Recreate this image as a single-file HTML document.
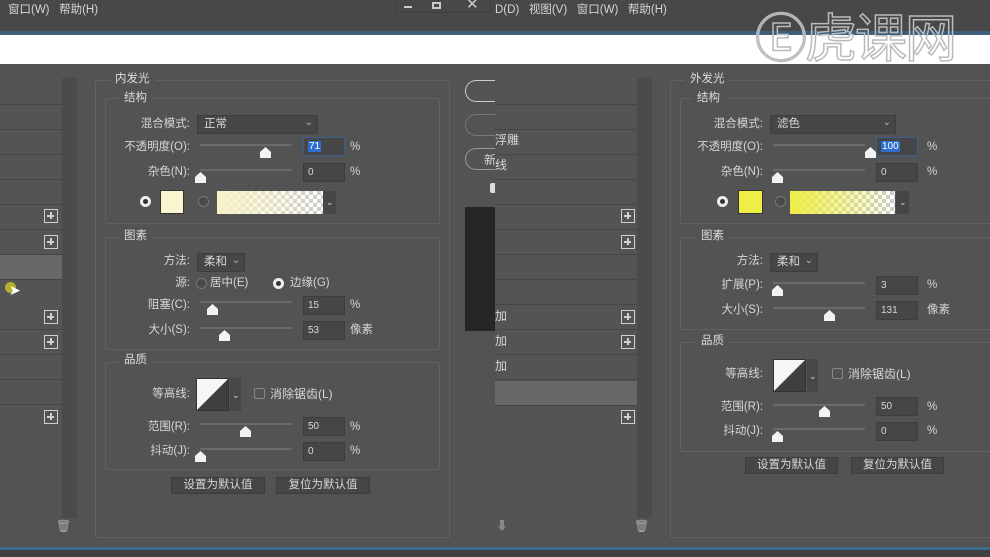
<!DOCTYPE html><html><head><meta charset="utf-8"><style>
*{margin:0;padding:0;box-sizing:border-box}
body{width:990px;height:557px;overflow:hidden;background:#535353;position:relative;font-family:"Liberation Sans","Noto Sans CJK SC",sans-serif;color:#d6d6d6;font-size:11.5px}
div,span{position:absolute}
.t{white-space:nowrap;line-height:14px}
.r{text-align:right}
.box{border:1px solid #616161;border-radius:2px}
.lbl{background:#535353;padding:0 5px;font-size:11.5px;color:#dcdcdc}
.in{background:#464646;border:1px solid #3d3d3d;height:19px;width:42px;padding-left:4px;line-height:17px;font-size:10px;color:#d8d8d8}
.tr{height:2px;background:#6a6a6a;width:92px}
.th{width:11px;height:11px;background:#f2f2f2;clip-path:polygon(50% 0,100% 45%,100% 100%,0 100%,0 45%)}
.dd{background:#464646;border:1px solid #3d3d3d;height:19px;padding-left:6px;line-height:17px}
.dd:after{content:"⌄";position:absolute;right:4px;top:-2px;font-size:10px;color:#bbb}
.row{left:0;height:25px;border-bottom:1px solid #454545}
.pl{width:14px;height:14px;border:1.5px solid #d0d0d0}
.pl:before{content:"";position:absolute;left:2px;top:5px;width:7px;height:1.5px;background:#d0d0d0}
.pl:after{content:"";position:absolute;left:5px;top:2px;width:1.5px;height:7px;background:#d0d0d0}
.rad{width:11px;height:11px;border-radius:50%;border:1px solid #777;background:#4a4a4a}
.rads{width:11px;height:11px;border-radius:50%;background:#eee}
.rads:after{content:"";position:absolute;left:3px;top:3px;width:5px;height:5px;border-radius:50%;background:#333}
.btn{background:#464646;border:1px solid #3d3d3d;height:17px;text-align:center;line-height:15px;font-size:11.5px}
.chk{width:11px;height:11px;border:1px solid #888;border-radius:2px}
.ck{background-image:linear-gradient(45deg,#ccc 25%,transparent 25%,transparent 75%,#ccc 75%),linear-gradient(45deg,#ccc 25%,transparent 25%,transparent 75%,#ccc 75%);background-size:8px 8px;background-position:0 0,4px 4px;background-color:#fff}
</style></head><body>
<div style="left:0;top:0;width:990px;height:31px;background:#484848"></div>
<div style="left:0;top:31px;width:990px;height:4px;background:#3e5f7c"></div>
<div style="left:0;top:35px;width:990px;height:29px;background:#fff"></div>
<div class="t" style="left:8px;top:3px;font-size:11.5px">窗口(W)&nbsp;&nbsp;&nbsp;帮助(H)</div>
<div style="left:396px;top:0;width:95px;height:13px;border:1px solid #3e3e3e;border-top:none"></div>
<div style="left:404px;top:6px;width:8px;height:2px;background:#ccc"></div>
<div style="left:432px;top:2px;width:9px;height:7px;border:2px solid #ccc"></div>
<div class="t" style="left:466px;top:-2px;font-size:15px;color:#ccc">✕</div>
<div class="t" style="left:495px;top:3px;font-size:11.5px">D(D)&nbsp;&nbsp;&nbsp;视图(V)&nbsp;&nbsp;&nbsp;窗口(W)&nbsp;&nbsp;&nbsp;帮助(H)</div>
<div class="t" style="left:755px;top:10px;font-size:52px;line-height:60px;color:transparent;-webkit-text-stroke:1.5px #bbb;letter-spacing:-2px">Ⓔ虎课网</div>

<div style="left:0;top:80px;width:62px;height:437px;background:#545454"></div>
<div class="row" style="top:80px;width:62px"></div>
<div class="row" style="top:105px;width:62px"></div>
<div class="row" style="top:130px;width:62px"></div>
<div class="row" style="top:155px;width:62px"></div>
<div class="row" style="top:180px;width:62px"></div>
<div class="row" style="top:205px;width:62px"></div>
<div class="row" style="top:230px;width:62px"></div>
<div class="row" style="top:255px;width:62px;background:#686868"></div>
<div class="row" style="top:305px;width:62px"></div>
<div class="row" style="top:330px;width:62px"></div>
<div class="row" style="top:355px;width:62px"></div>
<div class="row" style="top:380px;width:62px"></div>
<div style="left:62px;top:78px;width:15px;height:440px;background:#4b4b4b"></div>
<div class="pl" style="left:44px;top:209px"></div>
<div class="pl" style="left:44px;top:235px"></div>
<div class="pl" style="left:44px;top:310px"></div>
<div class="pl" style="left:44px;top:335px"></div>
<div class="pl" style="left:44px;top:410px"></div>
<div class="t" style="left:56px;top:519px;color:#aaa;font-size:12px">🗑</div>
<div style="left:5px;top:282px;width:11px;height:11px;border-radius:50%;background:#b8b030"></div>
<div class="t" style="left:9px;top:283px;font-size:14px;color:#fff">➤</div>

<div class="box" style="left:95px;top:80px;width:355px;height:458px"></div>
<div class="t lbl" style="left:110px;top:72px">内发光</div>
<div class="box" style="left:105px;top:98px;width:335px;height:126px"></div>
<div class="t lbl" style="left:119px;top:91px">结构</div>
<div class="t r" style="left:100px;width:90px;top:117px">混合模式:</div>
<div class="dd" style="left:197px;top:115px;width:121px">正常</div>
<div class="t r" style="left:90px;width:100px;top:140px">不透明度(O):</div>
<div class="tr" style="left:200px;top:144px"></div><div class="th" style="left:260px;top:147px"></div>
<div class="in" style="left:303px;top:137px;border-color:#3a5f8f"><span style="position:static;background:#2d6fd0;color:#fff;padding:0 1px">71</span></div><div class="t" style="left:350px;top:140px">%</div>
<div class="t r" style="left:100px;width:90px;top:165px">杂色(N):</div>
<div class="tr" style="left:200px;top:169px"></div><div class="th" style="left:195px;top:172px"></div>
<div class="in" style="left:303px;top:163px">0</div><div class="t" style="left:350px;top:165px">%</div>
<div class="rads" style="left:140px;top:196px"></div>
<div style="left:160px;top:190px;width:24px;height:24px;background:#fbf5cf;border:1px solid #333"></div>
<div class="rad" style="left:198px;top:196px"></div>
<div class="ck" style="left:217px;top:191px;width:106px;height:23px"><div style="left:0;top:0;width:100%;height:100%;background:linear-gradient(90deg,#f8f2c8,rgba(248,242,200,0))"></div></div>
<div style="left:323px;top:191px;width:13px;height:23px;background:#464646"></div><div class="t" style="left:326px;top:195px;font-size:9px">⌄</div>
<div class="box" style="left:105px;top:237px;width:335px;height:113px"></div>
<div class="t lbl" style="left:119px;top:229px">图素</div>
<div class="t r" style="left:100px;width:90px;top:254px">方法:</div>
<div class="dd" style="left:197px;top:253px;width:48px">柔和</div>
<div class="t r" style="left:100px;width:90px;top:276px">源:</div>
<div class="rad" style="left:196px;top:278px"></div><div class="t" style="left:210px;top:276px">居中(E)</div>
<div class="rads" style="left:273px;top:278px"></div><div class="t" style="left:290px;top:276px">边缘(G)</div>
<div class="t r" style="left:100px;width:90px;top:298px">阻塞(C):</div>
<div class="tr" style="left:200px;top:301px"></div><div class="th" style="left:207px;top:304px"></div>
<div class="in" style="left:303px;top:296px">15</div><div class="t" style="left:350px;top:298px">%</div>
<div class="t r" style="left:100px;width:90px;top:323px">大小(S):</div>
<div class="tr" style="left:200px;top:327px"></div><div class="th" style="left:219px;top:330px"></div>
<div class="in" style="left:303px;top:321px">53</div><div class="t" style="left:350px;top:323px">像素</div>
<div class="box" style="left:105px;top:362px;width:335px;height:108px"></div>
<div class="t lbl" style="left:119px;top:353px">品质</div>
<div class="t r" style="left:100px;width:90px;top:387px">等高线:</div>
<div style="left:196px;top:378px;width:33px;height:33px;background:#3f3f3f;border:1px solid #333"><svg width="33" height="33" style="position:absolute;left:-1px;top:-1px"><polygon points="1,32 32,1 1,1" fill="#f6f6f6"/></svg></div>
<div style="left:230px;top:378px;width:11px;height:33px;background:#474747"></div><div class="t" style="left:232px;top:388px;font-size:9px">⌄</div>
<div class="chk" style="left:254px;top:388px"></div><div class="t" style="left:270px;top:387px;font-size:12px">消除锯齿(L)</div>
<div class="t r" style="left:100px;width:90px;top:420px">范围(R):</div>
<div class="tr" style="left:200px;top:423px"></div><div class="th" style="left:240px;top:426px"></div>
<div class="in" style="left:303px;top:417px">50</div><div class="t" style="left:350px;top:420px">%</div>
<div class="t r" style="left:100px;width:90px;top:444px">抖动(J):</div>
<div class="tr" style="left:200px;top:448px"></div><div class="th" style="left:195px;top:451px"></div>
<div class="in" style="left:303px;top:442px">0</div><div class="t" style="left:350px;top:444px">%</div>
<div class="btn" style="left:171px;top:477px;width:94px">设置为默认值</div>
<div class="btn" style="left:276px;top:477px;width:94px">复位为默认值</div>

<div style="left:465px;top:80px;width:40px;height:22px;border:1.5px solid #ccc;border-radius:11px 0 0 11px;border-right:none"></div>
<div style="left:465px;top:114px;width:40px;height:22px;border:1px solid #777;border-radius:11px 0 0 11px;border-right:none"></div>
<div style="left:465px;top:148px;width:40px;height:22px;border:1px solid #999;border-radius:11px 0 0 11px;border-right:none"></div>
<div class="t" style="left:484px;top:153px;font-size:12px">新</div>
<div style="left:490px;top:183px;width:6px;height:10px;background:#ddd;border-radius:2px"></div>
<div style="left:465px;top:207px;width:30px;height:124px;background:#262626"></div>

<div style="left:495px;top:78px;width:142px;height:440px;background:#545454"></div>
<div class="row" style="left:495px;top:80px;width:142px"></div>
<div class="row" style="left:495px;top:105px;width:142px"></div>
<div class="row" style="left:495px;top:130px;width:142px"></div>
<div class="row" style="left:495px;top:155px;width:142px"></div>
<div class="row" style="left:495px;top:180px;width:142px"></div>
<div class="row" style="left:495px;top:205px;width:142px"></div>
<div class="row" style="left:495px;top:230px;width:142px"></div>
<div class="row" style="left:495px;top:255px;width:142px"></div>
<div class="row" style="left:495px;top:280px;width:142px"></div>
<div class="row" style="left:495px;top:305px;width:142px"></div>
<div class="row" style="left:495px;top:330px;width:142px"></div>
<div class="row" style="left:495px;top:355px;width:142px"></div>
<div class="row" style="left:495px;top:381px;width:142px;background:#686868"></div>
<div style="left:637px;top:78px;width:15px;height:440px;background:#4b4b4b"></div>
<div class="t" style="left:495px;top:133px;font-size:12px">浮雕</div>
<div class="t" style="left:495px;top:158px;font-size:12px">线</div>
<div class="t" style="left:495px;top:309px;font-size:12px">加</div>
<div class="t" style="left:495px;top:334px;font-size:12px">加</div>
<div class="t" style="left:495px;top:359px;font-size:12px">加</div>
<div class="pl" style="left:621px;top:209px"></div>
<div class="pl" style="left:621px;top:235px"></div>
<div class="pl" style="left:621px;top:310px"></div>
<div class="pl" style="left:621px;top:335px"></div>
<div class="pl" style="left:621px;top:410px"></div>
<div class="t" style="left:496px;top:519px;color:#888;font-size:12px">⬇</div>
<div class="t" style="left:634px;top:519px;color:#aaa;font-size:12px">🗑</div>

<div class="box" style="left:670px;top:80px;width:330px;height:458px"></div>
<div class="t lbl" style="left:685px;top:72px">外发光</div>
<div class="box" style="left:680px;top:98px;width:320px;height:126px"></div>
<div class="t lbl" style="left:692px;top:91px">结构</div>
<div class="t r" style="left:673px;width:90px;top:117px">混合模式:</div>
<div class="dd" style="left:770px;top:115px;width:126px">滤色</div>
<div class="t r" style="left:663px;width:100px;top:140px">不透明度(O):</div>
<div class="tr" style="left:773px;top:144px"></div><div class="th" style="left:865px;top:147px"></div>
<div class="in" style="left:876px;top:137px;border-color:#3a5f8f"><span style="position:static;background:#2d6fd0;color:#fff;padding:0 1px">100</span></div><div class="t" style="left:927px;top:140px">%</div>
<div class="t r" style="left:673px;width:90px;top:165px">杂色(N):</div>
<div class="tr" style="left:773px;top:169px"></div><div class="th" style="left:772px;top:172px"></div>
<div class="in" style="left:876px;top:163px">0</div><div class="t" style="left:927px;top:165px">%</div>
<div class="rads" style="left:717px;top:196px"></div>
<div style="left:738px;top:190px;width:25px;height:24px;background:#eeee44;border:1px solid #333"></div>
<div class="rad" style="left:775px;top:196px"></div>
<div class="ck" style="left:790px;top:191px;width:105px;height:23px"><div style="left:0;top:0;width:100%;height:100%;background:linear-gradient(90deg,#eeee44,rgba(238,238,68,0))"></div></div>
<div style="left:896px;top:191px;width:13px;height:23px;background:#464646"></div><div class="t" style="left:899px;top:195px;font-size:9px">⌄</div>
<div class="box" style="left:680px;top:237px;width:320px;height:93px"></div>
<div class="t lbl" style="left:696px;top:229px">图素</div>
<div class="t r" style="left:673px;width:90px;top:254px">方法:</div>
<div class="dd" style="left:770px;top:253px;width:48px">柔和</div>
<div class="t r" style="left:673px;width:90px;top:278px">扩展(P):</div>
<div class="tr" style="left:773px;top:282px"></div><div class="th" style="left:772px;top:285px"></div>
<div class="in" style="left:876px;top:276px">3</div><div class="t" style="left:927px;top:278px">%</div>
<div class="t r" style="left:673px;width:90px;top:303px">大小(S):</div>
<div class="tr" style="left:773px;top:307px"></div><div class="th" style="left:824px;top:310px"></div>
<div class="in" style="left:876px;top:301px">131</div><div class="t" style="left:927px;top:303px">像素</div>
<div class="box" style="left:680px;top:342px;width:320px;height:110px"></div>
<div class="t lbl" style="left:696px;top:334px">品质</div>
<div class="t r" style="left:673px;width:90px;top:367px">等高线:</div>
<div style="left:773px;top:359px;width:33px;height:33px;background:#3f3f3f;border:1px solid #333"><svg width="33" height="33" style="position:absolute;left:-1px;top:-1px"><polygon points="1,32 32,1 1,1" fill="#f6f6f6"/></svg></div>
<div style="left:807px;top:359px;width:11px;height:33px;background:#474747"></div><div class="t" style="left:809px;top:369px;font-size:9px">⌄</div>
<div class="chk" style="left:832px;top:368px"></div><div class="t" style="left:848px;top:367px;font-size:12px">消除锯齿(L)</div>
<div class="t r" style="left:673px;width:90px;top:400px">范围(R):</div>
<div class="tr" style="left:773px;top:404px"></div><div class="th" style="left:819px;top:406px"></div>
<div class="in" style="left:876px;top:397px">50</div><div class="t" style="left:927px;top:400px">%</div>
<div class="t r" style="left:673px;width:90px;top:424px">抖动(J):</div>
<div class="tr" style="left:773px;top:428px"></div><div class="th" style="left:772px;top:431px"></div>
<div class="in" style="left:876px;top:422px">0</div><div class="t" style="left:927px;top:424px">%</div>
<div class="btn" style="left:745px;top:457px;width:93px">设置为默认值</div>
<div class="btn" style="left:851px;top:457px;width:93px">复位为默认值</div>

<div style="left:0;top:547px;width:990px;height:3px;background:#3e6a8c"></div>
<div style="left:0;top:550px;width:990px;height:7px;background:#404040"></div>
</body></html>
